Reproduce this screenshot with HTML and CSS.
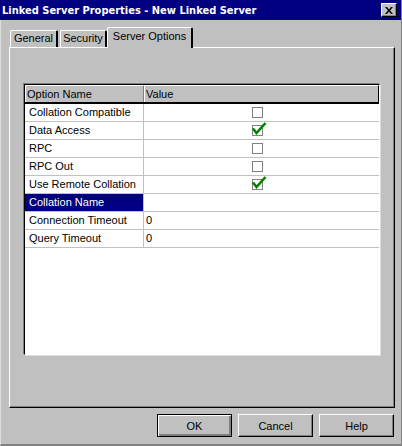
FILE: index.html
```html
<!DOCTYPE html>
<html>
<head>
<meta charset="utf-8">
<link rel="stylesheet" href="styles.css">
</head>
<body>
<div class="window">
  <div class="titlebar">
    <span class="title">Linked Server Properties - New Linked Server</span>
    <span class="close"><svg width="8" height="7" viewBox="0 0 8 7"><path d="M0 0h2l2 2.5 2-2.5h2l-3 3.5 3 3.5h-2l-2-2.5-2 2.5h-2l3-3.5z" fill="#000"/></svg></span>
  </div>
  <div class="tabs">
    <div class="tab t1">General</div>
    <div class="tab t2">Security</div>
    <div class="tab active">Server Options</div>
  </div>
  <div class="panel">
    <div class="grid">
      <div class="row head">
        <div class="c1">Option Name</div>
        <div class="c2">Value</div>
      </div>
      <div class="row"><div class="c1">Collation Compatible</div><div class="c2 cb"><span class="box"></span></div></div>
      <div class="row"><div class="c1">Data Access</div><div class="c2 cb"><span class="box"><svg class="tick" width="15" height="13" viewBox="0 0 15 13"><path d="M1 6.5 L4.5 11 L13.5 1" fill="none" stroke="#008000" stroke-width="2.6"/></svg></span></div></div>
      <div class="row"><div class="c1">RPC</div><div class="c2 cb"><span class="box"></span></div></div>
      <div class="row"><div class="c1">RPC Out</div><div class="c2 cb"><span class="box"></span></div></div>
      <div class="row"><div class="c1">Use Remote Collation</div><div class="c2 cb"><span class="box"><svg class="tick" width="15" height="13" viewBox="0 0 15 13"><path d="M1 6.5 L4.5 11 L13.5 1" fill="none" stroke="#008000" stroke-width="2.6"/></svg></span></div></div>
      <div class="row"><div class="c1 sel">Collation Name</div><div class="c2"></div></div>
      <div class="row"><div class="c1">Connection Timeout</div><div class="c2">0</div></div>
      <div class="row"><div class="c1">Query Timeout</div><div class="c2">0</div></div>
    </div>
  </div>
  <div class="buttons">
    <div class="btn default">OK</div>
    <div class="btn">Cancel</div>
    <div class="btn">Help</div>
  </div>
</div>
</body>
</html>
```

FILE: styles.css
```css
html, body {
  margin: 0;
  padding: 0;
  background: #c0c0c0;
}
.window {
  width: 402px;
  height: 446px;
  box-sizing: border-box;
  background: #c0c0c0;
  border-left: 1px solid #dfdfdf;
  border-right: 1px solid #808080;
  border-bottom: 2px solid #808080;
  font-family: "Liberation Sans", Arial, sans-serif;
  font-size: 11px;
  color: #000;
}
.titlebar {
  height: 20px;
  background: #000080;
  display: flex;
  align-items: center;
  padding: 0 4px 0 2px;
  margin-left: -1px;
}
.title {
  color: #fff;
  font-family: "DejaVu Sans Condensed", "DejaVu Sans", sans-serif;
  font-stretch: condensed;
  font-weight: bold;
  font-size: 11px;
}
.close {
  margin-left: auto;
  width: 16px;
  height: 14px;
  box-sizing: border-box;
  background: #c0c0c0;
  border-top: 1px solid #fff;
  border-left: 1px solid #fff;
  border-right: 1px solid #000;
  border-bottom: 1px solid #000;
  box-shadow: inset -1px -1px 0 #808080;
  display: flex;
  align-items: center;
  justify-content: center;
}
.tabs {
  display: flex;
  align-items: flex-end;
  padding: 7px 0 0 9px;
  height: 20px;
}
.tab {
  height: 17px;
  box-sizing: border-box;
  border-top: 1px solid #fff;
  border-left: 1px solid #fff;
  border-right: 2px solid #000;
  border-radius: 2px 2px 0 0;
  line-height: 15px;
  text-align: center;
  white-space: nowrap;
  margin-right: 2px;
}
.t1 {
  width: 48px;
}
.t2 {
  width: 47px;
  margin-right: 0;
}
.tab.active {
  height: 21px;
  margin-bottom: -1px;
  line-height: 16px;
  width: 86px;
  position: relative;
  background: #c0c0c0;
  z-index: 1;
}
.panel {
  margin-left: 8px;
  width: 386px;
  height: 361px;
  box-sizing: border-box;
  border-top: 1px solid #fff;
  border-left: 1px solid #fff;
  border-right: 1px solid #000;
  border-bottom: 1px solid #000;
  box-shadow: inset -1px -1px 0 #808080;
  padding: 36px 0 0 14px;
}
.grid {
  width: 356px;
  height: 271px;
  box-sizing: border-box;
  background: #fff;
  border-top: 1px solid #000;
  border-left: 1px solid #000;
  border-right: 1px solid #fff;
  border-bottom: 1px solid #fff;
  box-shadow: -1px -1px 0 #808080, 1px 1px 0 #dfdfdf;
}
.row {
  display: flex;
  height: 18px;
  border-bottom: 1px solid #c0c0c0;
  box-sizing: border-box;
}
.row.head {
  background: #c0c0c0;
  height: 19px;
  border-bottom: 2px solid #000;
}
.c1 {
  width: 119px;
  box-sizing: border-box;
  border-right: 1px solid #c0c0c0;
  padding-left: 4px;
  line-height: 17px;
  white-space: nowrap;
}
.c2 {
  flex: 1;
  padding-left: 2px;
  line-height: 17px;
}
.head .c1 {
  padding-left: 1px;
  border-right: 1px solid #808080;
  border-left: 1px solid #fff;
  border-top: 1px solid #fff;
  line-height: 16px;
}
.head .c2 {
  border-top: 1px solid #fff;
  border-left: 1px solid #fff;
  border-right: 1px solid #000;
  line-height: 16px;
  padding-left: 1px;
}
.sel {
  background: #000080;
  color: #fff;
}
.cb {
  padding-left: 108px;
  display: flex;
  align-items: center;
}
.box {
  width: 11px;
  height: 11px;
  box-sizing: border-box;
  border: 1px solid #808080;
  background: #fff;
  position: relative;
}
.tick {
  position: absolute;
  left: -1px;
  top: -4px;
}
.buttons {
  display: flex;
  justify-content: flex-end;
  gap: 6px;
  padding: 6px 7px 0 0;
}
.btn {
  width: 75px;
  height: 23px;
  box-sizing: border-box;
  border-top: 1px solid #fff;
  border-left: 1px solid #fff;
  border-right: 1px solid #000;
  border-bottom: 1px solid #000;
  box-shadow: inset -1px -1px 0 #808080;
  display: flex;
  align-items: center;
  justify-content: center;
}
.btn.default {
  border: 1px solid #000;
  box-shadow: inset 1px 1px 0 #fff, inset -2px -2px 0 #808080;
}
```
